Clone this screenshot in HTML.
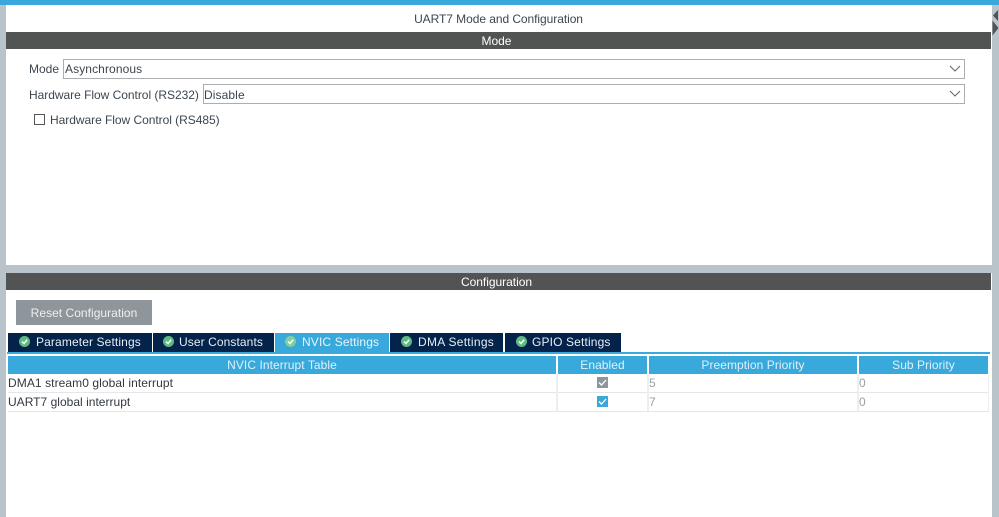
<!DOCTYPE html>
<html><head><meta charset="utf-8">
<style>
html,body{margin:0;padding:0;background:#fff}
body{width:999px;height:517px;position:relative;overflow:hidden;font-family:"Liberation Sans",sans-serif;font-size:12px;color:#3c4650}
.a{position:absolute;white-space:nowrap}
.bar{background:#525453;color:#fff;text-align:center;left:6px;width:981px;padding-right:4px;height:17px;line-height:18px;letter-spacing:-.02px}
.sel{height:18px;border:1px solid #a9aeb1;background:#fff;box-sizing:content-box;line-height:19px;padding-left:1px;color:#3c4650;letter-spacing:.1px}
.tab{top:333px;height:19px;background:#03234b;color:#e8eef4;line-height:18px}
.th{top:356px;height:18px;background:#39a9dc;color:#dff1fa;text-align:center;line-height:19px;letter-spacing:.06px}
.v{color:#9aa0a6}
</style></head><body>
<div class="a" style="left:0;top:0;width:999px;height:5px;background:#39a9dc"></div>
<div class="a" style="left:0;top:5px;width:6px;height:512px;background:#b9c4ca"></div>
<div class="a" style="left:992px;top:5px;width:7px;height:512px;background:#b9c4ca"></div>
<div class="a" style="left:6px;top:265px;width:986px;height:8px;background:#b9c4ca"></div>
<svg class="a" style="left:991px;top:6px" width="8" height="30"><path d="M7 4V15L2 9.500Z" fill="#525453"/><path d="M2 16V31L8 23.500Z" fill="#525453" transform="translate(-.5 -1.500)"/></svg>
<div class="a" style="left:6px;width:985px;text-align:center;top:12px;line-height:14px;letter-spacing:-.06px">UART7 Mode and Configuration</div>
<div class="a bar" style="top:32px">Mode</div>
<div class="a" style="left:29px;top:62px;line-height:14px">Mode</div>
<div class="a sel" style="left:63px;top:59px;width:899px">Asynchronous</div>
<div class="a" style="left:29px;top:88px;line-height:14px;letter-spacing:-.03px">Hardware Flow Control (RS232)</div>
<div class="a sel" style="left:203px;top:84px;width:760px;padding-left:0;line-height:20px">Disable</div>
<svg class="a" style="left:949px;top:65px" width="12" height="8"><path d="M1 1L6 6L11 1" fill="none" stroke="#666" stroke-width="1"/></svg>
<svg class="a" style="left:949px;top:90px" width="12" height="8"><path d="M1 1L6 6L11 1" fill="none" stroke="#666" stroke-width="1"/></svg>
<div class="a" style="left:34px;top:114px;width:9px;height:9px;border:1px solid #555;background:#fff"></div>
<div class="a" style="left:50px;top:113px;line-height:14px;letter-spacing:-.04px">Hardware Flow Control (RS485)</div>

<div class="a bar" style="top:273px">Configuration</div>
<div class="a" style="left:16px;top:300px;width:136px;height:25px;background:#8e969c;color:#eef0f1;text-align:center;line-height:26px;letter-spacing:.03px">Reset Configuration</div>

<div class="a tab" style="left:8px;width:144px;letter-spacing:.12px"><svg class="a" style="left:11px;top:3px" width="11" height="11"><circle cx="5.500" cy="5.500" r="5.500" fill="#5dbb82"/><path d="M3 5.500L5 7.500L8.200 3.800" fill="none" stroke="#fff" stroke-width="1.500"/></svg><span class="a" style="left:28px">Parameter Settings</span></div>
<div class="a tab" style="left:153px;width:121px;letter-spacing:.09px"><svg class="a" style="left:10px;top:3px" width="11" height="11"><circle cx="5.500" cy="5.500" r="5.500" fill="#5dbb82"/><path d="M3 5.500L5 7.500L8.200 3.800" fill="none" stroke="#fff" stroke-width="1.500"/></svg><span class="a" style="left:26px">User Constants</span></div>
<div class="a tab" style="left:275px;width:114px;background:#39a9dc;color:#e6f5fc;letter-spacing:.14px"><svg class="a" style="left:10px;top:3px" width="11" height="11"><circle cx="5.500" cy="5.500" r="5.500" fill="#7fcfa0"/><path d="M3 5.500L5 7.500L8.200 3.800" fill="none" stroke="#fff" stroke-width="1.500"/></svg><span class="a" style="left:27px">NVIC Settings</span></div>
<div class="a tab" style="left:390px;width:113px;letter-spacing:.28px"><svg class="a" style="left:11px;top:3px" width="11" height="11"><circle cx="5.500" cy="5.500" r="5.500" fill="#5dbb82"/><path d="M3 5.500L5 7.500L8.200 3.800" fill="none" stroke="#fff" stroke-width="1.500"/></svg><span class="a" style="left:28px">DMA Settings</span></div>
<div class="a tab" style="left:505px;width:116px;letter-spacing:.14px"><svg class="a" style="left:11px;top:3px" width="11" height="11"><circle cx="5.500" cy="5.500" r="5.500" fill="#5dbb82"/><path d="M3 5.500L5 7.500L8.200 3.800" fill="none" stroke="#fff" stroke-width="1.500"/></svg><span class="a" style="left:27px">GPIO Settings</span></div>
<div class="a" style="left:7px;top:352px;width:983px;height:2px;background:#39a9dc"></div>

<div class="a th" style="left:8px;width:548px">NVIC Interrupt Table</div>
<div class="a th" style="left:558px;width:89px">Enabled</div>
<div class="a th" style="left:649px;width:208px">Preemption Priority</div>
<div class="a th" style="left:859px;width:129px">Sub Priority</div>

<div class="a" style="left:8px;top:392px;width:981px;height:1px;background:#e4e6e8"></div>
<div class="a" style="left:8px;top:411px;width:981px;height:1px;background:#e4e6e8"></div>
<div class="a" style="left:556px;top:374px;width:2px;height:37px;background:#eceef0"></div>
<div class="a" style="left:647px;top:374px;width:2px;height:37px;background:#eceef0"></div>
<div class="a" style="left:857px;top:374px;width:2px;height:37px;background:#eceef0"></div>
<div class="a" style="left:988px;top:374px;width:1px;height:37px;background:#eceef0"></div>

<div class="a" style="left:8px;top:376px;line-height:14px;letter-spacing:.08px;color:#33393f">DMA1 stream0 global interrupt</div>
<div class="a" style="left:8px;top:395px;line-height:14px;letter-spacing:.02px;color:#33393f">UART7 global interrupt</div>

<svg class="a" style="left:597px;top:377px" width="11" height="11"><rect width="11" height="11" fill="#8e969c"/><path d="M2 5.500L4.500 8L9 3" fill="none" stroke="#fff" stroke-width="1.300"/></svg>
<svg class="a" style="left:597px;top:396px" width="11" height="11"><rect width="11" height="11" fill="#39a9dc"/><path d="M2 5.500L4.500 8L9 3" fill="none" stroke="#fff" stroke-width="1.300"/></svg>

<div class="a v" style="left:649px;top:376px;line-height:14px">5</div>
<div class="a v" style="left:649px;top:395px;line-height:14px">7</div>
<div class="a v" style="left:859px;top:376px;line-height:14px">0</div>
<div class="a v" style="left:859px;top:395px;line-height:14px">0</div>
</body></html>
